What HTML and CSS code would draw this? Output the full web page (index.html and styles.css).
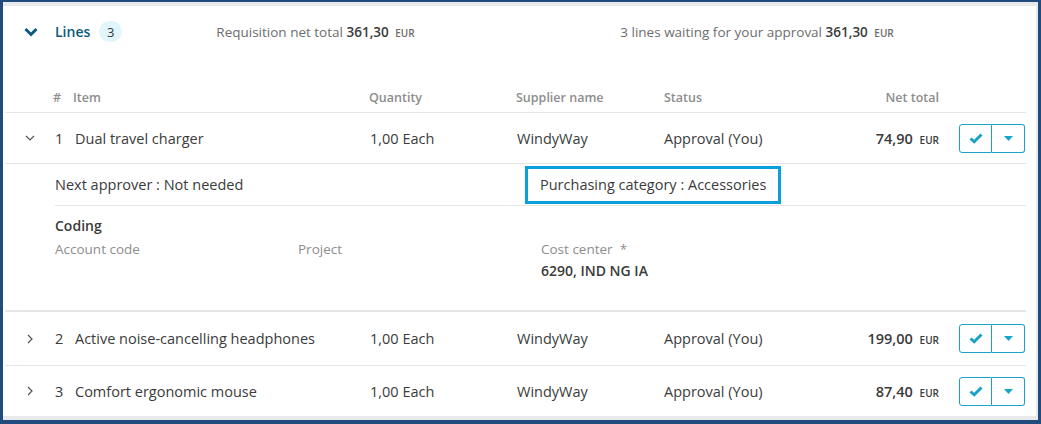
FILE: index.html
```html
<!DOCTYPE html>
<html>
  <head>
    <meta charset="utf-8">
    <title>Requisition lines</title>
    <link rel="stylesheet" href="styles.css">
  </head>
  <body>
    <div class="frame">
      <div class="card">
        <div class="summary">
          <span class="toggle">
            <svg width="14" height="10" viewBox="0 0 14 10"><path d="M1.5 2 L7 7.5 L12.5 2" fill="none" stroke="#0d5b7c" stroke-width="3"/></svg>
          </span>
          <span class="title">Lines</span>
          <span class="badge">3</span>
          <span class="total first">Requisition net total <b>361,30</b> <small>EUR</small></span>
          <span class="total">3 lines waiting for your approval <b>361,30</b> <small>EUR</small></span>
        </div>

        <div class="table">
          <div class="row head">
            <span></span>
            <span>#</span>
            <span>Item</span>
            <span>Quantity</span>
            <span>Supplier name</span>
            <span>Status</span>
            <span class="num">Net total</span>
            <span></span>
          </div>

          <div class="row line">
            <span class="chev"><svg width="10" height="6" viewBox="0 0 10 6"><path d="M1 1 L5 5 L9 1" fill="none" stroke="#555" stroke-width="1.2"/></svg></span>
            <span>1</span>
            <span>Dual travel charger</span>
            <span>1,00 Each</span>
            <span>WindyWay</span>
            <span>Approval (You)</span>
            <span class="num"><b>74,90</b> <small>EUR</small></span>
            <span class="actions">
              <button class="approve"><svg width="14" height="11" viewBox="0 0 14 11"><path d="M1.5 5.5 L5.2 8.8 L12.5 1.5" fill="none" stroke="#1aa3c8" stroke-width="3"/></svg></button>
              <button class="more"><svg width="9" height="5" viewBox="0 0 9 5"><path d="M0 0 H9 L4.5 5 Z" fill="#1aa3c8"/></svg></button>
            </span>
          </div>

          <div class="details">
            <div class="facts">
              <span>Next approver : Not needed</span>
              <span class="highlight">Purchasing category : Accessories</span>
            </div>
            <div class="coding">
              <h3>Coding</h3>
              <div class="fields">
                <div class="field"><label>Account code</label></div>
                <div class="field"><label>Project</label></div>
                <div class="field"><label>Cost center&nbsp; *</label><strong>6290, IND NG IA</strong></div>
              </div>
            </div>
          </div>

          <div class="row line tall">
            <span class="chev"><svg width="6" height="10" viewBox="0 0 6 10"><path d="M1 1 L5 5 L1 9" fill="none" stroke="#555" stroke-width="1.2"/></svg></span>
            <span>2</span>
            <span>Active noise-cancelling headphones</span>
            <span>1,00 Each</span>
            <span>WindyWay</span>
            <span>Approval (You)</span>
            <span class="num"><b>199,00</b> <small>EUR</small></span>
            <span class="actions">
              <button class="approve"><svg width="14" height="11" viewBox="0 0 14 11"><path d="M1.5 5.5 L5.2 8.8 L12.5 1.5" fill="none" stroke="#1aa3c8" stroke-width="3"/></svg></button>
              <button class="more"><svg width="9" height="5" viewBox="0 0 9 5"><path d="M0 0 H9 L4.5 5 Z" fill="#1aa3c8"/></svg></button>
            </span>
          </div>

          <div class="row line last">
            <span class="chev"><svg width="6" height="10" viewBox="0 0 6 10"><path d="M1 1 L5 5 L1 9" fill="none" stroke="#555" stroke-width="1.2"/></svg></span>
            <span>3</span>
            <span>Comfort ergonomic mouse</span>
            <span>1,00 Each</span>
            <span>WindyWay</span>
            <span>Approval (You)</span>
            <span class="num"><b>87,40</b> <small>EUR</small></span>
            <span class="actions">
              <button class="approve"><svg width="14" height="11" viewBox="0 0 14 11"><path d="M1.5 5.5 L5.2 8.8 L12.5 1.5" fill="none" stroke="#1aa3c8" stroke-width="3"/></svg></button>
              <button class="more"><svg width="9" height="5" viewBox="0 0 9 5"><path d="M0 0 H9 L4.5 5 Z" fill="#1aa3c8"/></svg></button>
            </span>
          </div>
        </div>
      </div>
    </div>
  </body>
</html>
```

FILE: styles.css
```css
html, body {
  margin: 0;
  height: 100%;
}

body {
  background: #1f4b7d;
  font-family: "Open Sans", "Noto Sans", sans-serif;
  font-size: 14.5px;
  color: #3b3b3b;
  padding: 2px 3px 4px 3px;
  box-sizing: border-box;
  overflow: hidden;
}

.frame {
  background: #e8e9ea;
  padding: 4px 2px 4px 0;
  height: 100%;
  box-sizing: border-box;
}

.card {
  background: #fff;
  height: 100%;
  padding: 0 10px 0 2px;
  box-sizing: border-box;
}

/* Header with totals */
.summary {
  display: flex;
  align-items: center;
  height: 53px;
  padding-left: 19px;
  padding-bottom: 2px;
  box-sizing: border-box;
}

.toggle {
  display: flex;
  width: 31px;
}

.title {
  color: #0d5b7c;
  font-size: 14px;
  font-weight: 600;
}

.badge {
  margin-left: 9px;
  width: 23px;
  height: 21px;
  border-radius: 11px;
  background: #e1f5fc;
  display: flex;
  align-items: center;
  justify-content: center;
  font-size: 13px;
}

.total {
  color: #6d6d6d;
  font-size: 13.5px;
}

.total b {
  color: #3b3b3b;
  font-weight: 600;
}

.total small,
.num small {
  font-size: 10px;
  font-weight: 600;
  margin-left: 3px;
}

.first {
  margin-left: 94px;
  width: 404px;
}

/* Table */
.row {
  display: grid;
  grid-template-columns: 48px 20px 296px 147px 148px 176px 99px 1fr;
  align-items: center;
  border-bottom: 1px solid #e6e6e6;
}

.row.head {
  height: 54px;
  padding-top: 24px;
  box-sizing: border-box;
  font-size: 12.5px;
  font-weight: 600;
  color: #8d8d8d;
}

.row.line {
  height: 50px;
}

.row.line > span:nth-child(2),
.row.line > span:nth-child(3) {
  padding-left: 2px;
}

.row.line > span:nth-child(4),
.row.line > span:nth-child(5) {
  padding-left: 1px;
}

.row.tall {
  height: 53px;
}

.row.last {
  border-bottom: none;
}

.num {
  text-align: right;
}

.num b {
  font-weight: 600;
}

.chev {
  display: flex;
  justify-content: center;
  padding-left: 2px;
}

.actions {
  display: flex;
  justify-content: flex-end;
  padding-right: 1px;
}

.actions button {
  width: 33px;
  height: 29px;
  border: 1px solid #1aa3c8;
  background: #fff;
  display: flex;
  align-items: center;
  justify-content: center;
  padding: 0;
}

.approve {
  border-radius: 3px 0 0 3px;
}

.more {
  border-left: none !important;
  border-radius: 0 3px 3px 0;
}

/* Expanded line */
.details {
  border-bottom: 2px solid #e6e6e6;
}

.facts {
  margin-left: 50px;
  display: grid;
  grid-template-columns: 470px auto;
  align-items: center;
  height: 41px;
  border-bottom: 1px solid #e6e6e6;
}

.highlight {
  justify-self: start;
  border: 3px solid #0aa0dc;
  padding: 6px 12px 7px;
}

.coding {
  margin-left: 50px;
  height: 104px;
  padding-top: 10px;
  box-sizing: border-box;
}

.coding h3 {
  margin: 0 0 2px;
  font-size: 14px;
  line-height: 20px;
  font-weight: 600;
}

.fields {
  display: grid;
  grid-template-columns: 243px 243px auto;
}

.field label {
  display: block;
  color: #8d8d8d;
  font-size: 13.5px;
  line-height: 22px;
}

.field strong {
  display: block;
  font-size: 14px;
  font-weight: 600;
  line-height: 22px;
}
```
